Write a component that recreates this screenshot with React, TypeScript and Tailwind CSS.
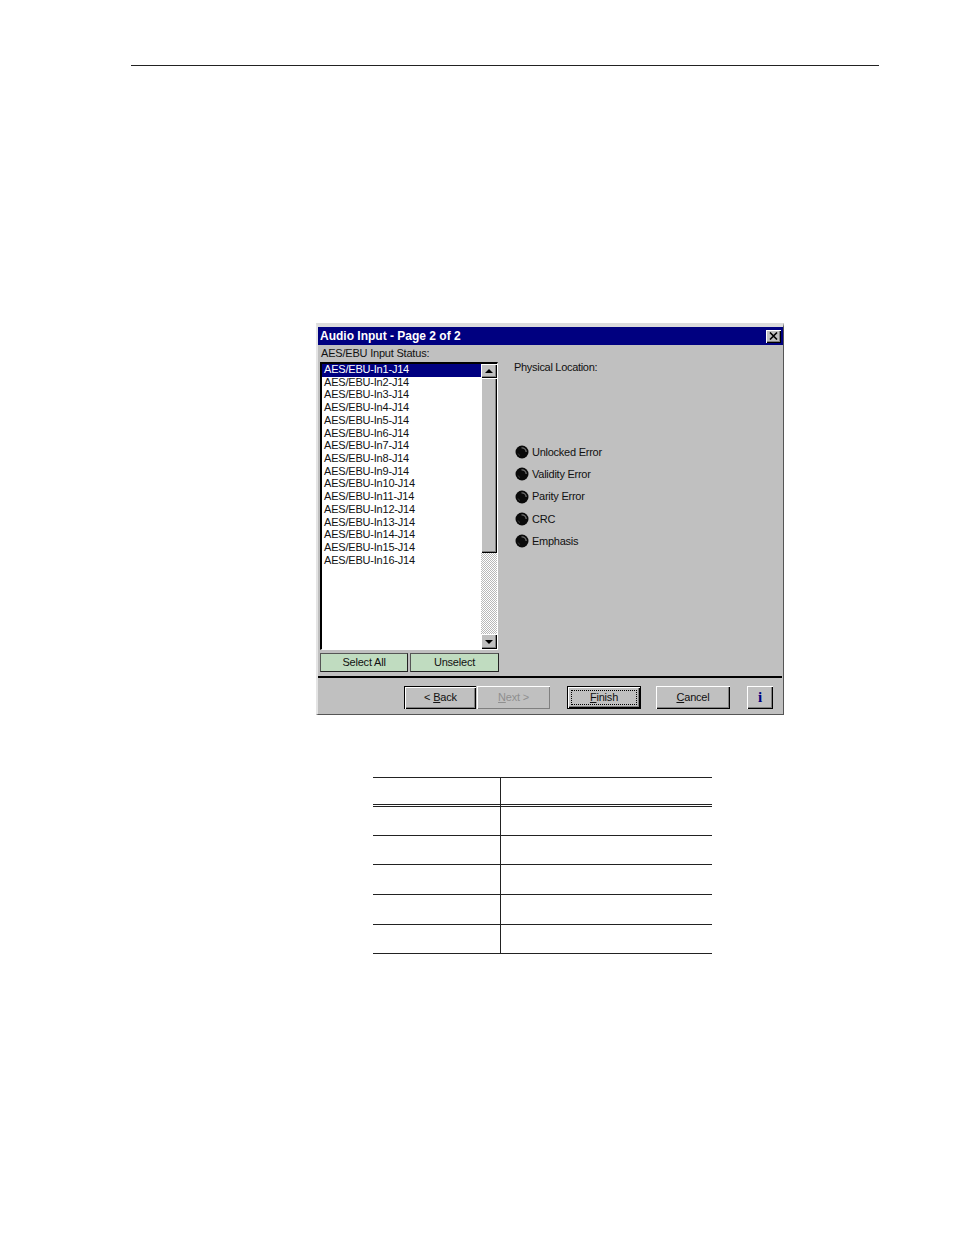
const items = Array.from({ length: 16 }, (_, i) => `AES/EBU-In${i + 1}-J14`);
const leds = ["Unlocked Error", "Validity Error", "Parity Error", "CRC", "Emphasis"];
const rowHeights = ["h-[29px]", "h-[29px]", "h-[30px]", "h-[30px]", "h-[29px]"];

function Led() {
  return (
    <svg width="14" height="14" viewBox="0 0 14 14" className="shrink-0">
      <circle cx="7" cy="7" r="6.5" fill="#0a0a0a" />
      <path d="M6.5 2.8 A4.3 4.3 0 0 1 11.2 7" fill="none" stroke="#6e6e6e" strokeWidth="1.3" />
      <path d="M3 8.5 A4.3 4.3 0 0 0 5 10.6" fill="none" stroke="#3a3a3a" strokeWidth="1" />
    </svg>
  );
}

function Arrow({ down }: { down?: boolean }) {
  return (
    <svg width="8" height="4" viewBox="0 0 8 4">
      <path d={down ? "M0 0H8L4 4Z" : "M0 4H8L4 0Z"} fill="#000" />
    </svg>
  );
}

function ScrollBtn({ down }: { down?: boolean }) {
  return (
    <div className={`${down ? "h-[15px]" : "h-[14px]"} bg-[#c0c0c0] flex items-center justify-center shadow-[inset_1px_1px_0_#fff,inset_-1px_-1px_0_#000,inset_-2px_-2px_0_#808080]`}>
      <Arrow down={down} />
    </div>
  );
}

function NavButton({ label, rest, width, variant }: { label: string; rest: string; width: string; variant: "back" | "next" | "finish" | "cancel" }) {
  const frame =
    variant === "finish"
      ? "border border-black shadow-[inset_1px_1px_0_#fff,inset_-1px_-1px_0_#000,inset_-2px_-2px_0_#808080]"
      : variant === "back"
        ? "border-t border-l border-black shadow-[inset_1px_1px_0_#fff,inset_-1px_-1px_0_#000,inset_-2px_-2px_0_#808080]"
        : variant === "next"
          ? "shadow-[inset_1px_1px_0_#fff,inset_-1px_-1px_0_#808080]"
          : "shadow-[inset_1px_1px_0_#fff,inset_-1px_-1px_0_#000,inset_-2px_-2px_0_#808080]";
  const text = variant === "next" ? "text-[#8f8f8f]" : "text-[#111]";
  return (
    <div className={`${width} h-[23px] shrink-0 flex items-center justify-center pb-[1px] text-[11px] tracking-[-0.2px] ${text} ${frame} relative`}>
      {variant === "finish" && <div className="absolute inset-[3px] border border-dotted border-black" />}
      <span>
        {variant === "back" && "< "}
        <u>{label}</u>
        {rest}
        {variant === "next" && " >"}
      </span>
    </div>
  );
}

export default function App() {
  return (
    <div className="w-[954px] h-[1235px] bg-white overflow-hidden font-['Liberation_Sans',Arial,sans-serif]">
      <div className="h-[65px]" />
      <div className="ml-[131px] w-[748px] h-px bg-[#222]" />
      <div className="h-[257px]" />

      <div className="ml-[316px] w-[468px] h-[392px] bg-[#c0c0c0] border-t-[4px] border-l-2 border-t-[#dcdcdc] border-l-[#e4e4e4] border-r border-b border-r-[#555] border-b-[#555] flex flex-col">
        <div className="h-[18px] bg-[#000080] flex items-center justify-between pl-[2px] pr-[2px] shrink-0">
          <span className="text-white font-bold text-[12px]">Audio Input - Page 2 of 2</span>
          <div className="w-[15px] h-[13px] bg-[#c0c0c0] flex items-center justify-center shadow-[inset_1px_1px_0_#fff,inset_-1px_-1px_0_#000,inset_-2px_-2px_0_#808080]">
            <svg width="9" height="8" viewBox="0 0 9 8">
              <path d="M1 0.5L8 7.5M8 0.5L1 7.5" stroke="#000" strokeWidth="1.6" />
            </svg>
          </div>
        </div>

        <div className="flex h-[331px] shrink-0 text-[11px] tracking-[-0.2px] text-[#111]">
          <div className="w-[182px] ml-[2px] shrink-0 flex flex-col">
            <div className="h-[16px] pl-[1px] leading-[16px]">AES/EBU Input Status:</div>
            <div className="w-[178px] h-[288px] mt-[1px] flex border-t-2 border-l-2 border-t-black border-l-black border-r border-b border-r-white border-b-white">
              <div className="flex-1 bg-white min-w-0">
                {items.map((t, i) => (
                  <div
                    key={t}
                    className={`h-[12.73px] leading-[11.5px] pl-[2px] whitespace-nowrap ${i === 0 ? "bg-[#000080] text-white" : ""}`}
                  >
                    {t}
                  </div>
                ))}
              </div>
              <div className="w-[16px] shrink-0 flex flex-col">
                <ScrollBtn />
                <div className="h-[175px] bg-[#c0c0c0] shadow-[inset_1px_1px_0_#fff,inset_-1px_-1px_0_#000,inset_-2px_-2px_0_#808080]" />
                <div className="flex-1 bg-[repeating-conic-gradient(#ffffff_0_25%,#b8b8b8_0_50%)] bg-[length:2px_2px]" />
                <ScrollBtn down />
              </div>
            </div>
            <div className="flex gap-[2px] mt-[3px]">
              <div className="w-[88px] h-[19px] pb-[1px] bg-[#c0dcc0] border border-[#222] border-t-[#555] border-l-[#555] flex items-center justify-center">Select All</div>
              <div className="w-[89px] h-[19px] pb-[1px] bg-[#c0dcc0] border border-[#222] border-t-[#555] border-l-[#555] flex items-center justify-center">Unselect</div>
            </div>
          </div>

          <div className="flex-1 pl-[12px]">
            <div className="mt-[14px] h-[16px] leading-[16px] tracking-[-0.3px]">Physical Location:</div>
            <div className="mt-[70px] ml-[1px] flex flex-col gap-[8.3px] tracking-[-0.25px]">
              {leds.map((l) => (
                <div key={l} className="flex items-center gap-[3px] h-[14px]">
                  <Led />
                  <span>{l}</span>
                </div>
              ))}
            </div>
          </div>
        </div>

        <div className="h-[2px] bg-black shrink-0 mr-[1px]" />
        <div className="flex pt-[8px]">
          <div className="ml-[86px]" />
          <NavButton label="B" rest="ack" width="w-[72px]" variant="back" />
          <div className="w-px" />
          <NavButton label="N" rest="ext" width="w-[73px]" variant="next" />
          <div className="w-[17px]" />
          <NavButton label="F" rest="inish" width="w-[74px]" variant="finish" />
          <div className="w-[15px]" />
          <NavButton label="C" rest="ancel" width="w-[74px]" variant="cancel" />
          <div className="w-[17px]" />
          <div className="w-[26px] h-[23px] flex items-center justify-center text-[#000080] font-bold text-[15px] font-['Liberation_Serif',serif] shadow-[inset_1px_1px_0_#fff,inset_-1px_-1px_0_#000,inset_-2px_-2px_0_#808080]">i</div>
        </div>
      </div>

      <div className="h-[62px]" />
      <div className="ml-[373px] w-[339px] border-b border-[#222]">
        <div className="h-[28px] flex border-t border-b border-[#222]">
          <div className="w-[128px] border-r border-[#222]" />
        </div>
        <div className="h-px flex">
          <div className="w-[128px] border-r border-[#222]" />
        </div>
        {rowHeights.map((h, i) => (
          <div key={i} className={`${h} flex border-t border-[#222]`}>
            <div className="w-[128px] border-r border-[#222]" />
          </div>
        ))}
      </div>
    </div>
  );
}
